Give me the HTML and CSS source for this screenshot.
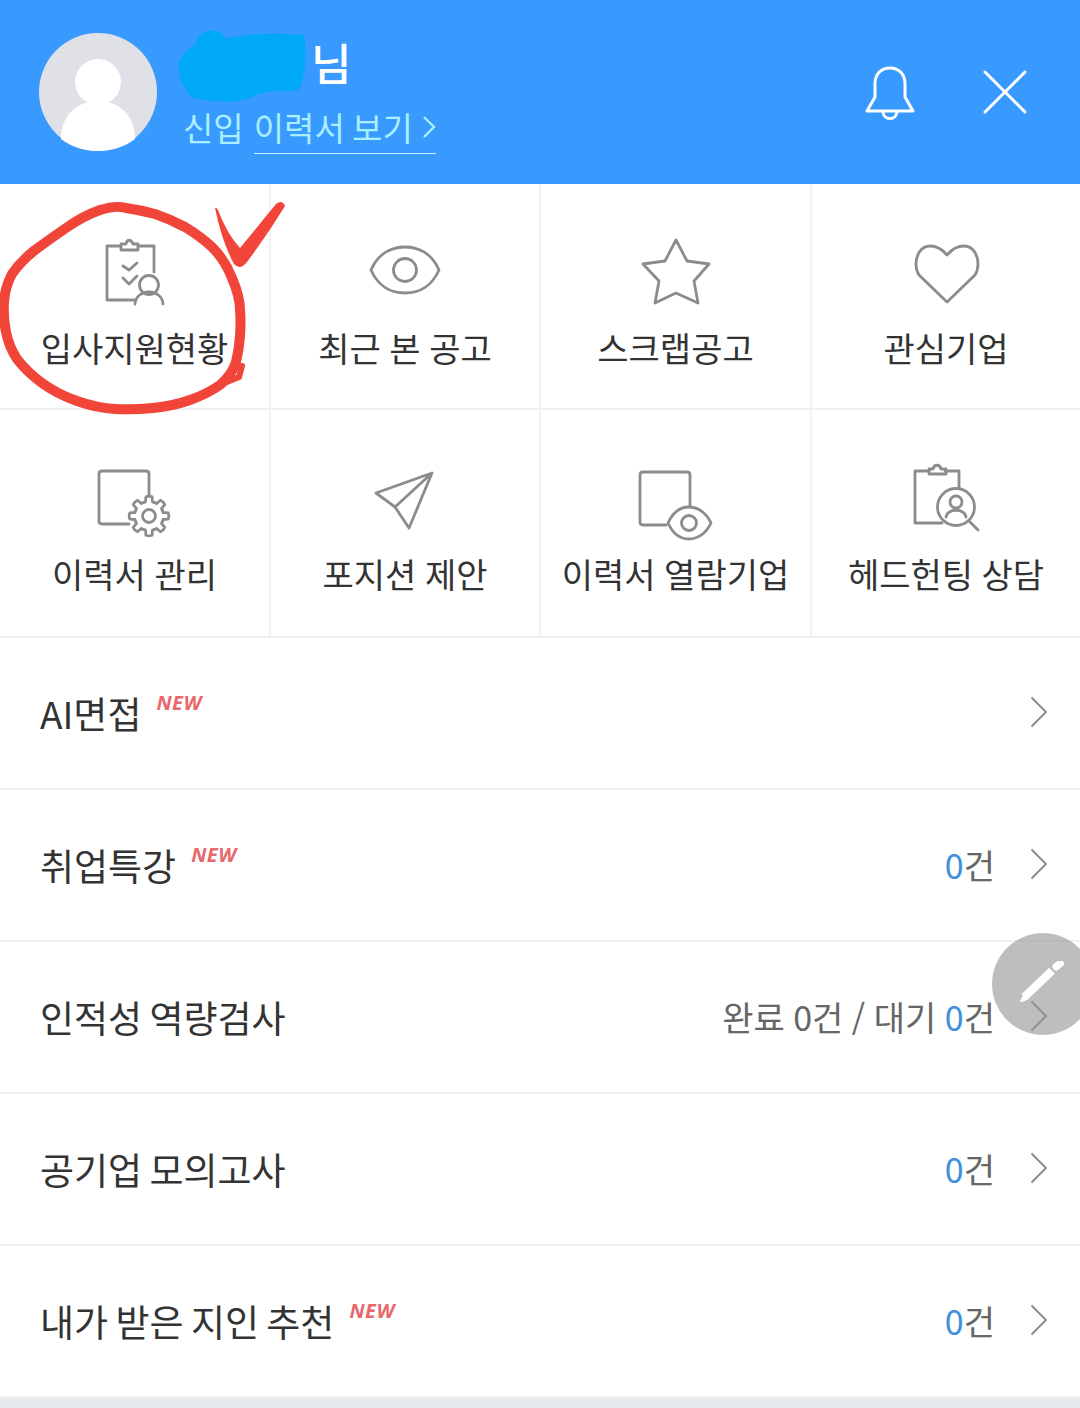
FILE: index.html
```html
<!DOCTYPE html>
<html lang="ko">
<head>
<meta charset="utf-8">
<title>마이페이지</title>
<link rel="stylesheet" href="styles.css">
</head>
<body>
<div class="page">
  <header class="head">
    <svg class="avatar" viewBox="0 0 118 118">
      <circle cx="59" cy="59" r="59" fill="#dfe1e7"/>
      <circle cx="59" cy="49" r="23" fill="#fff"/>
      <path d="M22 106C22 82 38 68 59 68S96 82 96 106C86 114 72 118 59 118S32 114 22 106Z" fill="#fff"/>
    </svg>
    <div class="who">
      <div class="name-row">
        <svg class="scribble" viewBox="0 0 130 78">
          <path d="M3 40C3 28 14 22 20 16C22 2 44 -2 50 12C70 6 100 6 128 8C132 30 128 50 124 62C110 66 92 62 80 68C60 78 40 74 20 72C10 68 3 54 3 40Z" fill="#00a9f7"/>
        </svg>
        <span class="name">님</span>
      </div>
      <div class="sub">
        <span>신입</span>
        <span class="sub-link">이력서 보기
          <svg class="sub-chev" viewBox="0 0 14 24"><path d="M2 2L12 12L2 22" fill="none" stroke="#a9efff" stroke-width="2.4"/></svg>
        </span>
      </div>
    </div>
    <div class="head-actions">
      <svg class="bell" viewBox="0 0 54 56">
        <path d="M4 46L12 32V19C12 9 18 3 27 3S42 9 42 19V32L50 46Z" fill="none" stroke="#fff" stroke-width="3" stroke-linejoin="round"/>
        <path d="M20 46C20 56 34 56 34 46" fill="none" stroke="#fff" stroke-width="3"/>
      </svg>
      <svg class="close" viewBox="0 0 44 44">
        <path d="M2 2L42 42M42 2L2 42" fill="none" stroke="#fff" stroke-width="3" stroke-linecap="round"/>
      </svg>
    </div>
  </header>

  <section class="menu">
    <div class="menu-row row-one">
      <a class="cell">
        <svg class="ico" viewBox="95 234 80 80">
          <path d="M120 246H107V300H136M154 272V246H138" />
          <path d="M121 250V244H126C127 239 131 239 133 244H138V250Z" />
          <path d="M123 266L129 270L137 263M123 278L129 284L137 276" />
          <circle cx="149" cy="285" r="9.5"/>
          <path d="M135 304C136 288 162 288 163 304"/>
        </svg>
        <span class="label">입사지원현황</span>
      </a>
      <a class="cell">
        <svg class="ico" viewBox="365 234 80 80">
          <path d="M371 270C378 254 391 247 405 247C419 247 432 254 439 270C432 286 419 293 405 293C391 293 378 286 371 270Z"/>
          <circle cx="405" cy="270" r="11.5"/>
        </svg>
        <span class="label">최근 본 공고</span>
      </a>
      <a class="cell">
        <svg class="ico" viewBox="635 234 80 80">
          <path d="M675 240L686 261L708 264L693 281L697 303L675 293L654 303L658 281L642 264L664 261Z"/>
        </svg>
        <span class="label">스크랩공고</span>
      </a>
      <a class="cell">
        <svg class="ico" viewBox="906 234 80 80">
          <path d="M947 255C942 249 936 246 930 246C921 246 916 255 916 264C916 269 917 272 919 275L947 302L975 275C977 272 978 269 978 264C978 255 973 246 964 246C958 246 952 249 947 255Z"/>
        </svg>
        <span class="label">관심기업</span>
      </a>
    </div>
    <div class="menu-row row-two">
      <a class="cell">
        <svg class="ico" viewBox="95 462 80 80">
          <path d="M129 524H102Q99 524 99 521V474Q99 471 102 471H146Q149 471 149 474V496"/>
          <g transform="translate(149 516)">
            <path id="tooth" d="M-5.55-13.4L-3.5-14.07L-3.05-19.26Q0-20.5 3.05-19.26L3.5-14.07L5.55-13.4"/>
            <use href="#tooth" transform="rotate(45)"/>
            <use href="#tooth" transform="rotate(90)"/>
            <use href="#tooth" transform="rotate(135)"/>
            <use href="#tooth" transform="rotate(180)"/>
            <use href="#tooth" transform="rotate(225)"/>
            <use href="#tooth" transform="rotate(270)"/>
            <use href="#tooth" transform="rotate(315)"/>
            <circle r="6.5"/>
          </g>
        </svg>
        <span class="label">이력서 관리</span>
      </a>
      <a class="cell">
        <svg class="ico" viewBox="365 462 80 80">
          <path d="M432 473L376 493L395 507L409 528ZM432 473L395 507"/>
        </svg>
        <span class="label">포지션 제안</span>
      </a>
      <a class="cell">
        <svg class="ico" viewBox="635 462 80 80">
          <path d="M665 525H642Q639 525 639 522V475Q639 472 642 472H686Q689 472 689 475V505"/>
          <path d="M667 523C672 512 680 507 688 507C696 507 705 512 710 523C705 534 696 539 688 539C680 539 672 534 667 523Z"/>
          <circle cx="688" cy="523" r="7.5"/>
        </svg>
        <span class="label">이력서 열람기업</span>
      </a>
      <a class="cell">
        <svg class="ico" viewBox="906 462 80 80">
          <path d="M929 471H915V523H942M959 488V471H945"/>
          <path d="M929 474V469H933C934 464 940 464 941 469H946V474Z"/>
          <circle cx="956" cy="507" r="18.5"/>
          <circle cx="956" cy="502" r="6"/>
          <path d="M946 517C947 508 965 508 966 517M969 521L978 530"/>
        </svg>
        <span class="label">헤드헌팅 상담</span>
      </a>
    </div>
    <svg class="pen-mark" viewBox="0 0 300 240">
      <path d="M126 24Q140 26 155 30Q170 35 185 43Q200 52 212 63Q225 76 232 94Q240 113 240 126Q241 139 240 152Q239 166 236 178Q232 191 220 201Q207 210 190 216Q173 222 153 224Q133 226 115 225Q97 224 77 217Q57 210 42 199Q27 188 17 175Q9 163 6 148Q3 133 4 118Q5 103 12 90Q20 78 35 66Q50 55 66 44Q83 32 100 26Q116 21 126 24Z" fill="none" stroke="#f1453a" stroke-width="10"/>
      <path d="M242 182L239 193L222 200" fill="none" stroke="#f1453a" stroke-width="6" stroke-linecap="round"/>
      <path d="M215 24Q216 23 218 26Q227 50 240 64Q258 42 276 20Q282 15 285 22Q268 50 247 78Q240 87 234 80Q222 58 215 24Z" fill="#f1453a"/>
    </svg>
  </section>

  <ul class="list">
    <li class="item">
      <span class="title">AI면접</span><span class="new">NEW</span>
      <span class="value"></span>
      <svg class="chev" viewBox="0 0 18 32"><path d="M1.500 1.500L16 16L1.500 30.500"/></svg>
    </li>
    <li class="item">
      <span class="title">취업특강</span><span class="new">NEW</span>
      <span class="value"><b>0</b>건</span>
      <svg class="chev" viewBox="0 0 18 32"><path d="M1.500 1.500L16 16L1.500 30.500"/></svg>
    </li>
    <li class="item">
      <span class="title">인적성 역량검사</span>
      <span class="value">완료 0건 / 대기 <b>0</b>건</span>
      <svg class="chev" viewBox="0 0 18 32"><path d="M1.500 1.500L16 16L1.500 30.500"/></svg>
    </li>
    <li class="item">
      <span class="title">공기업 모의고사</span>
      <span class="value"><b>0</b>건</span>
      <svg class="chev" viewBox="0 0 18 32"><path d="M1.500 1.500L16 16L1.500 30.500"/></svg>
    </li>
    <li class="item">
      <span class="title">내가 받은 지인 추천</span><span class="new">NEW</span>
      <span class="value"><b>0</b>건</span>
      <svg class="chev" viewBox="0 0 18 32"><path d="M1.500 1.500L16 16L1.500 30.500"/></svg>
    </li>
  </ul>
  <div class="foot"></div>

  <button class="fab" type="button" aria-label="쓰기">
    <svg class="fab-ico" viewBox="0 0 60 56">
      <path d="M41 12L7 44" fill="none" stroke="#fff" stroke-width="10"/>
      <path d="M46 7L51 3" fill="none" stroke="#fff" stroke-width="9" stroke-linecap="round"/>
      <path d="M3 49L6 43L9 47Z" fill="#fff" stroke="#fff" stroke-width="2" stroke-linejoin="round"/>
    </svg>
  </button>
</div>
</body>
</html>
```
FILE: styles.css
```css
* { box-sizing: border-box; }
html, body { margin: 0; padding: 0; background: #fff; }
.page {
  position: relative;
  width: 1080px;
  height: 1408px;
  overflow: hidden;
  font-family: "Noto Sans CJK KR", "Noto Sans", sans-serif;
  color: #333;
}
.head {
  display: flex;
  align-items: center;
  height: 184px;
  padding-left: 39px;
  background: #3899ff;
}
.avatar { width: 118px; height: 118px; flex: none; }
.who { display: flex; flex-direction: column; margin-left: 26px; margin-top: -4px; }
.name-row { display: flex; align-items: center; height: 78px; margin-left: -7px; }
.scribble { width: 130px; height: 78px; flex: none; overflow: visible; }
.name {
  margin-left: 5px;
  font-size: 44px;
  line-height: 78px;
  font-weight: 500;
  color: #fff;
  position: relative;
  top: -4px;
}
.sub {
  display: flex;
  gap: 10px;
  font-size: 33px;
  line-height: 44px;
  word-spacing: -2px;
  color: #a9efff;
}
.sub-link {
  display: flex;
  align-items: center;
  gap: 9px;
  padding-bottom: 4px;
  border-bottom: 1px solid #c8f3ff;
}
.sub-chev { width: 14px; height: 24px; }
.head-actions {
  display: flex;
  align-items: center;
  gap: 66px;
  margin-left: auto;
  margin-right: 53px;
}
.bell { width: 54px; height: 56px; margin-top: 2px; }
.close { width: 44px; height: 44px; }

.menu { position: relative; }
.menu-row { display: grid; grid-template-columns: 271px 270px 271px 268px; }
.cell {
  display: flex;
  flex-direction: column;
  align-items: center;
  border-right: 2px solid #f3f3f3;
  border-bottom: 2px solid #f1f1f1;
}
.cell:last-child { border-right: 0; }
.row-one .cell { height: 226px; padding-top: 50px; }
.row-two .cell { height: 228px; padding-top: 52px; }
.row-two .ico { margin-bottom: 10px; }
.row-one .ico { margin-bottom: 12px; }
.ico {
  width: 80px;
  height: 80px;
  fill: none;
  stroke: #8c8c8c;
  stroke-width: 2.8;
  stroke-linejoin: round;
  stroke-linecap: round;
}
.label { font-size: 34px; line-height: 44px; word-spacing: -1px; white-space: nowrap; }
.pen-mark {
  position: absolute;
  left: 0;
  top: 0;
  width: 300px;
  height: 240px;
}

.list { list-style: none; margin: 0; padding: 0; }
.item {
  display: flex;
  align-items: center;
  height: 152px;
  padding: 0 32px 0 40px;
  border-bottom: 2px solid #f1f1f1;
}
.title { font-size: 37px; line-height: 48px; word-spacing: -3px; white-space: nowrap; }
.new {
  margin: 0 0 20px 15px;
  font-family: "Noto Sans", sans-serif;
  font-size: 20px;
  line-height: 24px;
  letter-spacing: 0.5px;
  font-weight: 700;
  font-style: italic;
  color: #e8686c;
}
.value { margin-left: auto; font-size: 34px; line-height: 48px; word-spacing: -1px; color: #666; }
.value b { font-weight: 400; color: #3f90dd; }
.chev {
  width: 18px;
  height: 32px;
  margin: 0 0 2px 35px;
  flex: none;
  fill: none;
  stroke: #8c8c8c;
  stroke-width: 2;
}
.foot { height: 11px; background: #e6eaee; }

.fab {
  position: absolute;
  left: 992px;
  top: 933px;
  width: 102px;
  height: 102px;
  padding: 0;
  border: 0;
  border-radius: 50%;
  background: rgba(150, 150, 150, 0.62);
}
.fab-ico {
  position: absolute;
  left: 26px;
  top: 28px;
  width: 50px;
  height: 46px;
}
```
